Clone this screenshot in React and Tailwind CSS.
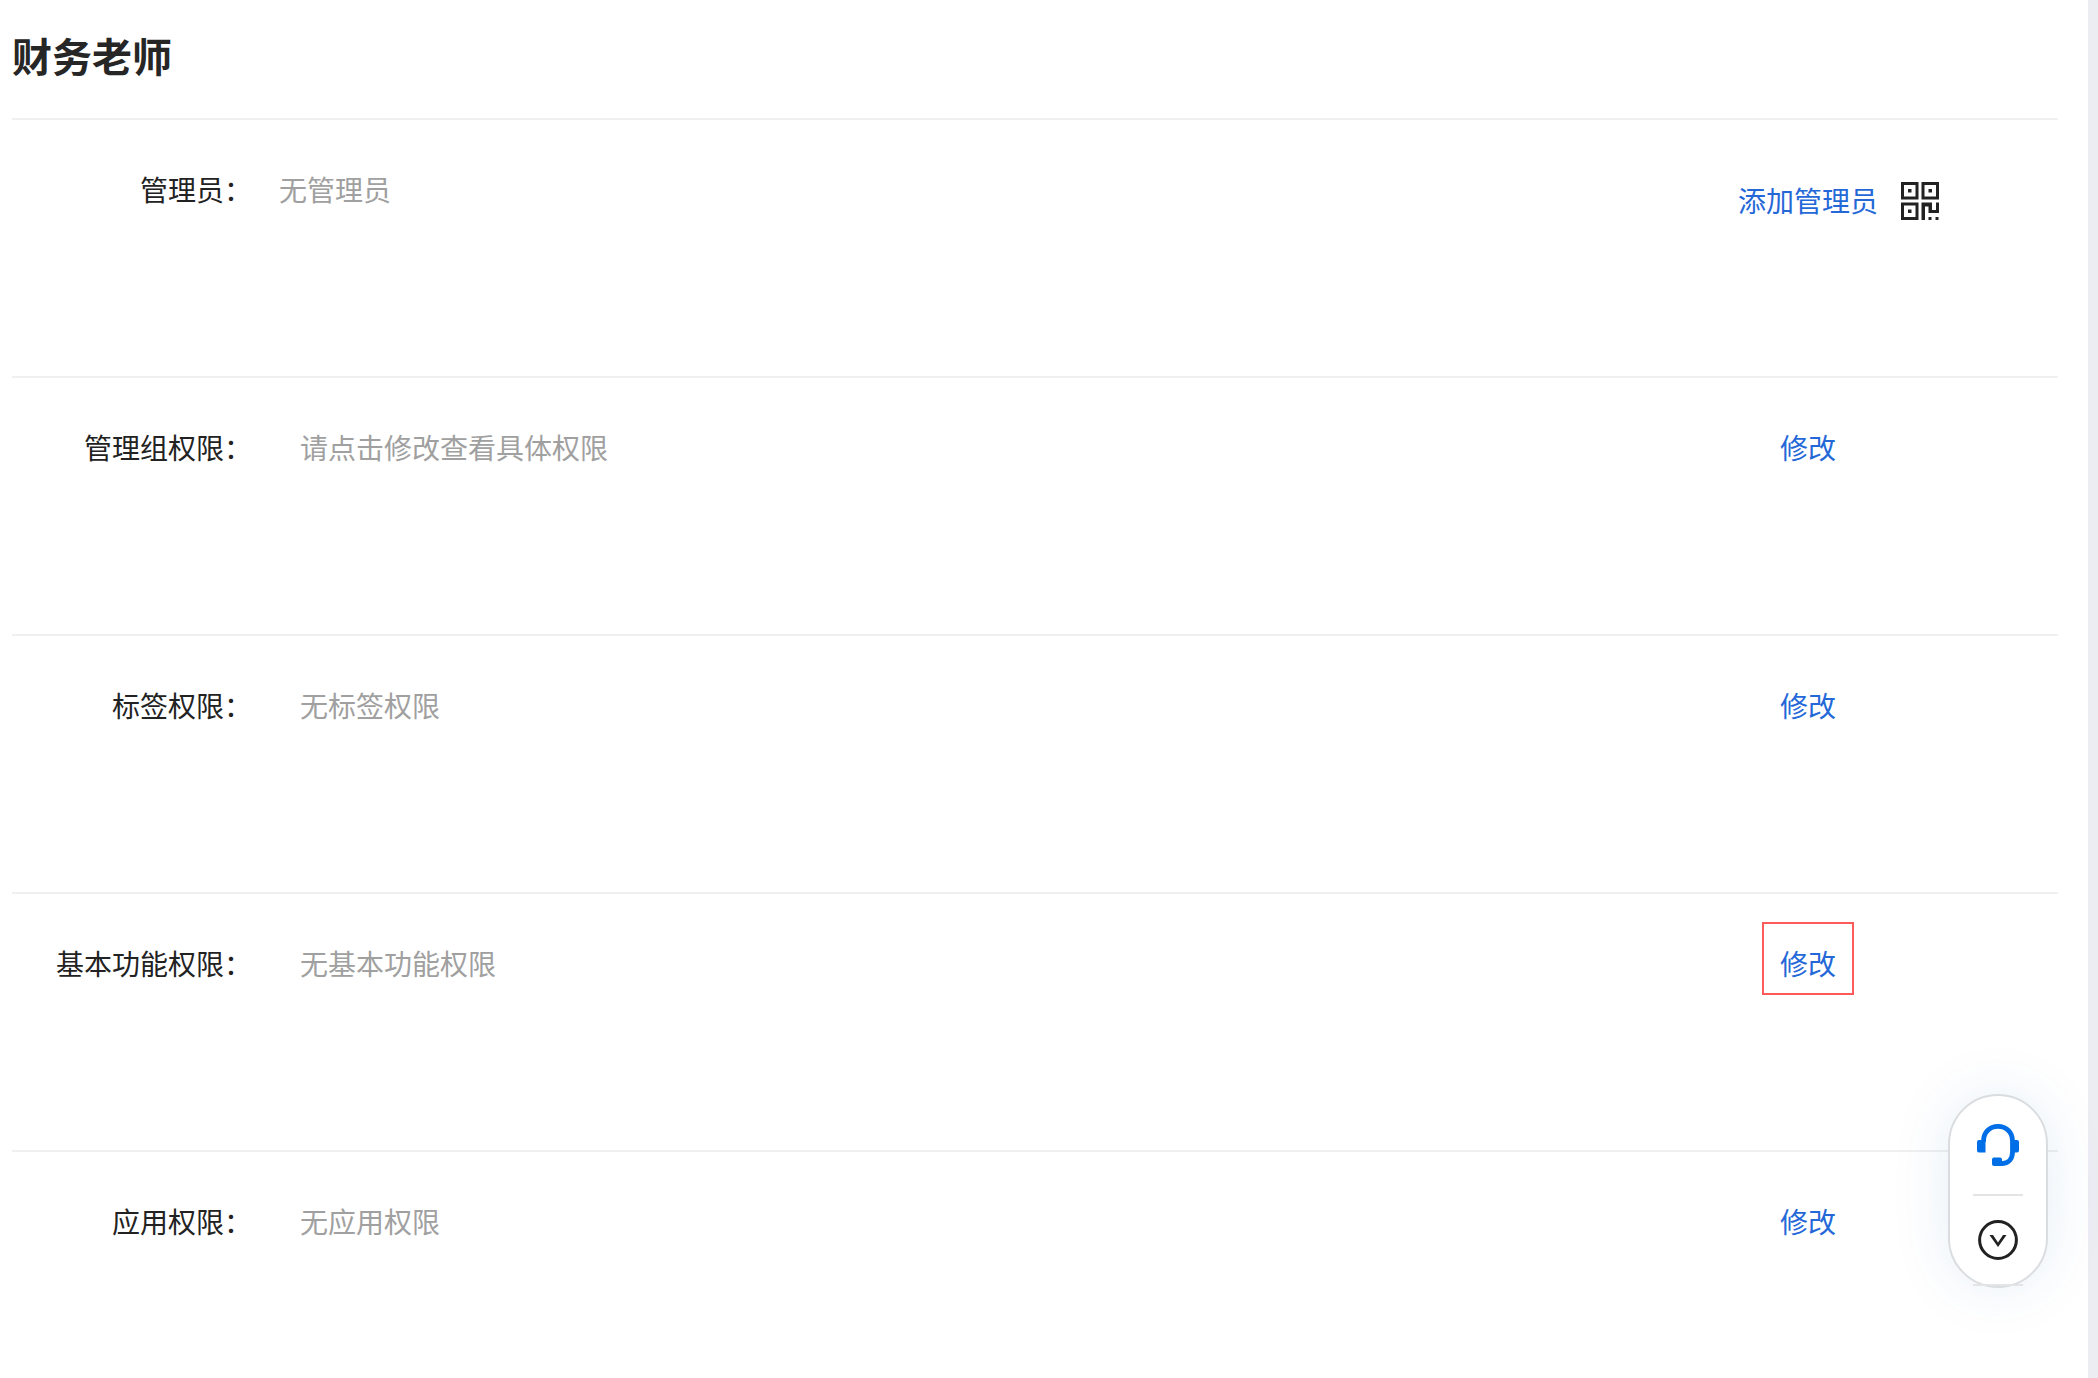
const rows = [
  { label: '管理组权限：', value: '请点击修改查看具体权限' },
  { label: '标签权限：', value: '无标签权限' },
  { label: '基本功能权限：', value: '无基本功能权限', marked: true },
  { label: '应用权限：', value: '无应用权限' },
];

function QrIcon() {
  return (
    <svg width="38" height="38" viewBox="0 0 38 38" fill="#222" aria-hidden="true">
      <path fillRule="evenodd" d="M0 0h17.500v17.500H0zM3 3v11.500h11.500V3z" />
      <path fillRule="evenodd" d="M20.500 0H38v17.500H20.500zM23.500 3v11.500H35V3z" />
      <path fillRule="evenodd" d="M0 20.500h17.500V38H0zM3 23.500V35h11.500V23.500z" />
      <path d="M7 7h3.500v3.500H7zM27.500 7H31v3.500h-3.500zM7 27.500h3.500V31H7z" />
      <path d="M20.500 20.500H31V28h4v-7.500h3V31H27.500v-6.500h-3.500V38h-3.500z" />
      <path d="M27.500 35h3v3h-3zM34.500 35h3v3h-3z" />
    </svg>
  );
}

function HeadsetIcon() {
  return (
    <svg width="42" height="42" viewBox="0 0 42 42" aria-hidden="true">
      <path
        d="M6.500 18v-1C6.500 8.500 12.500 2.400 21 2.400S35.500 8.500 35.500 17v11c0 7-4 11.600-11 11.600"
        fill="none"
        stroke="#006ee6"
        strokeWidth="4.800"
      />
      <path
        fill="#006ee6"
        d="M2 16h6.500v12.500H2a2 2 0 0 1-2-2V18a2 2 0 0 1 2-2zM34 16h6a2 2 0 0 1 2 2v8.500a2 2 0 0 1-2 2h-6zM17 33.500h6a2 2 0 0 1 2 2V42h-8a2 2 0 0 1-2-2v-4.500a2 2 0 0 1 2-2z"
      />
    </svg>
  );
}

function CollapseIcon() {
  return (
    <svg width="40" height="40" viewBox="0 0 40 40" fill="none" aria-hidden="true">
      <circle cx="20" cy="20" r="18.400" stroke="#222" strokeWidth="3" />
      <path d="M11.500 15H15l5 7.500 5-7.500h3.500L20 27z" fill="#222" />
    </svg>
  );
}

function Row({ label, value, valueGap, children }) {
  return (
    <section className="flex h-[258px] items-start border-t-2 border-[#f0f0f0] pt-[49px]">
      <h2 className="w-60 shrink-0 text-right text-[28px] leading-10 text-[#222]">{label}</h2>
      <p className={`${valueGap} grow text-[28px] leading-10 text-[#a0a0a0]`}>{value}</p>
      <div className="w-[500px] shrink-0">{children}</div>
    </section>
  );
}

export default function App() {
  return (
    <div className="min-h-screen bg-[#ecedf3] pr-2.5 font-['Noto_Sans_CJK_SC',sans-serif]">
      <main className="min-h-screen bg-white pr-[30px] pl-3">
        <h1 className="flex h-[118px] items-center pb-2 text-[40px] font-bold text-[#262626]">财务老师</h1>
        <Row label="管理员：" value="无管理员" valueGap="pl-[27px]">
          <div className="grid grid-cols-[1fr_auto_1fr] items-end gap-[23px] pt-[11px]">
            <a href="#add" className="col-start-2 text-[28px] leading-10 text-[#2468d8]">
              添加管理员
            </a>
            <button type="button" aria-label="二维码" className="justify-self-start">
              <QrIcon />
            </button>
          </div>
        </Row>
        {rows.map((row) => (
          <Row key={row.label} label={row.label} value={row.value} valueGap="pl-12">
            <div className="flex justify-center">
              <a
                href="#edit"
                className={
                  row.marked
                    ? '-mt-[21px] border-2 border-[#ff5a5a] px-4 pt-[19px] pb-2.5 text-[28px] leading-10 text-[#2468d8]'
                    : 'text-[28px] leading-10 text-[#2468d8]'
                }
              >
                修改
              </a>
            </div>
          </Row>
        ))}
      </main>
      <aside className="fixed right-[50px] bottom-[90px] flex h-[194px] w-[100px] flex-col items-center rounded-full border-2 border-[#dadde0] bg-white shadow-[0_0_60px_rgba(0,100,180,0.1)]">
        <button type="button" aria-label="客服" className="flex h-[98px] items-center justify-center">
          <HeadsetIcon />
        </button>
        <hr className="h-0.5 w-[50px] border-0 bg-[#e4e4e4]" />
        <button type="button" aria-label="收起" className="flex h-[88px] items-center justify-center">
          <CollapseIcon />
        </button>
        <hr className="h-0.5 w-[50px] border-0 bg-[#e4e4e4]" />
      </aside>
    </div>
  );
}
